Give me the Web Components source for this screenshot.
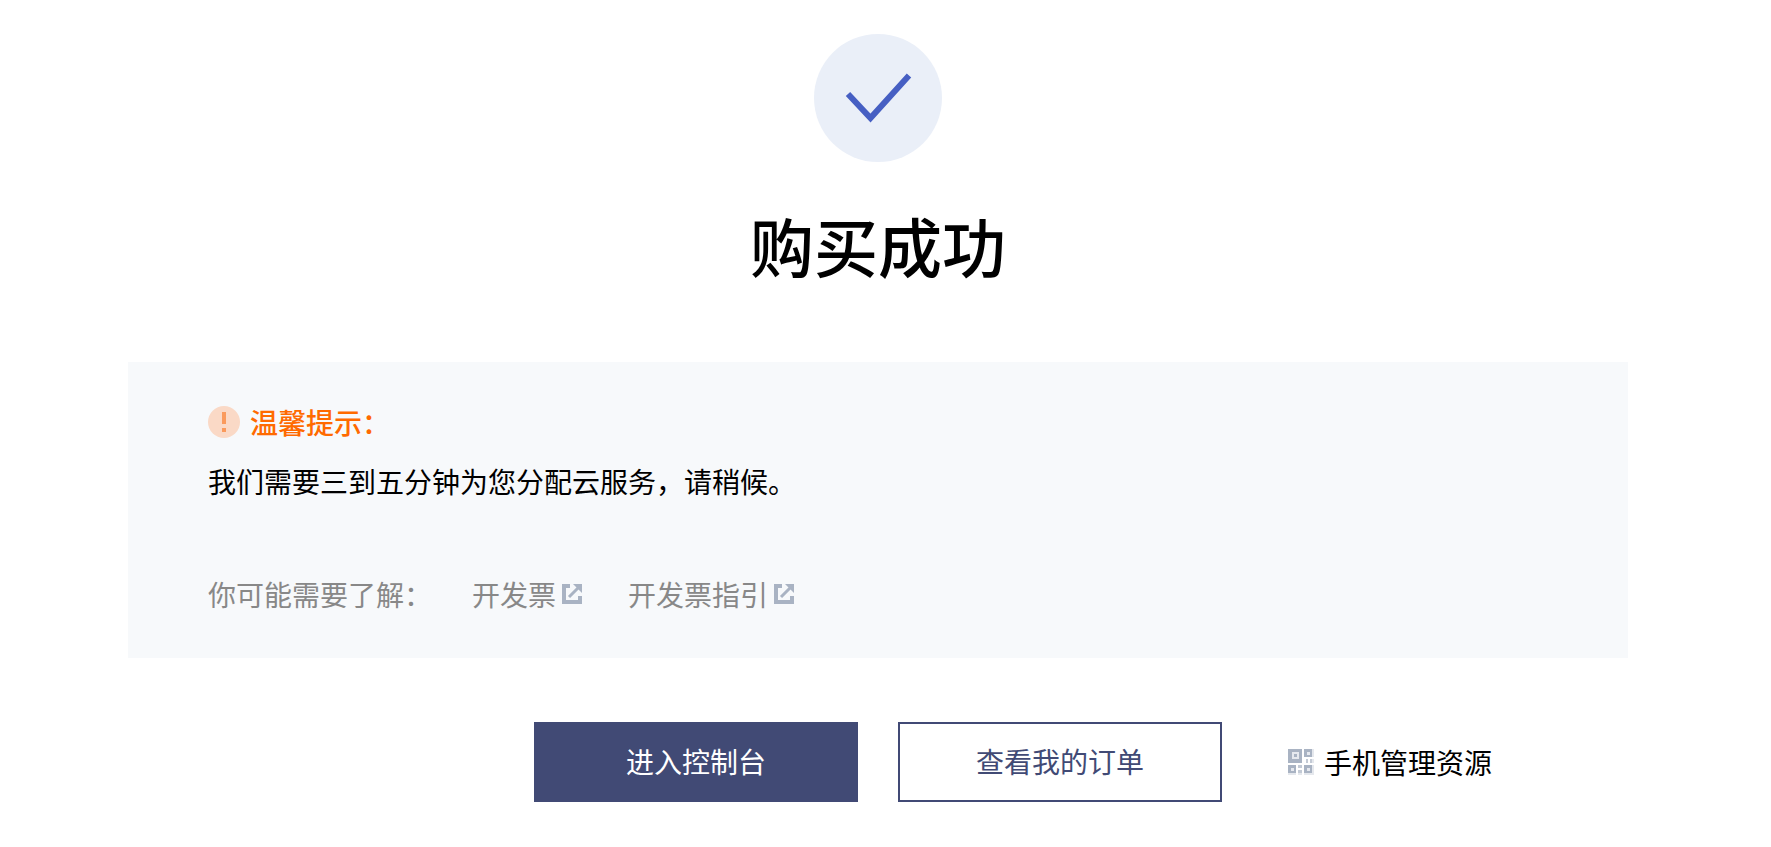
<!DOCTYPE html>
<html lang="zh-CN">
<head>
<meta charset="utf-8">
<title>购买成功</title>
<style>
  body {
    margin: 0;
    background: #fff;
    color: #000;
    font: 28px/40px "Noto Sans CJK SC", sans-serif;
  }
</style>
</head>
<body>
<purchase-result>
  <span slot="title">购买成功</span>
  <notice-panel slot="notice">
    <span slot="heading">温馨提示：</span>
    我们需要三到五分钟为您分配云服务，请稍候。
    <span slot="more">你可能需要了解：</span>
    <external-link slot="more" href="#invoice">开发票</external-link>
    <external-link slot="more" href="#invoice-guide">开发票指引</external-link>
  </notice-panel>
  <action-button slot="actions" primary>进入控制台</action-button>
  <action-button slot="actions">查看我的订单</action-button>
  <mobile-link slot="aside" href="#mobile">手机管理资源</mobile-link>
</purchase-result>

<script>
/**
 * Base element which renders the static template of its class in an open shadow root.
 */
class BaseElement extends HTMLElement {
  constructor() {
    super();
    const template = document.createElement('template');
    template.innerHTML = `<style>${this.constructor.styles}</style>${this.constructor.template}`;
    this.attachShadow({ mode: 'open' }).appendChild(template.content.cloneNode(true));
  }
}

/** Base for elements which wrap an anchor and pass their href on to it. */
class LinkElement extends BaseElement {
  static get observedAttributes() {
    return ['href'];
  }

  attributeChangedCallback(name, oldValue, newValue) {
    this.shadowRoot.querySelector('a').setAttribute(name, newValue);
  }
}

/** The round success mark. */
class SuccessMark extends BaseElement {
  static get styles() {
    return `
      :host { display: block; width: 128px; height: 128px; border-radius: 50%; background: #eaeff8; }
      svg { display: block; }
    `;
  }

  static get template() {
    return `
      <svg width="128" height="128" viewBox="0 0 128 128" fill="none" aria-hidden="true">
        <path d="M34 60 L56.5 84 L95 41.5" stroke="#465fc3" stroke-width="6"/>
      </svg>
    `;
  }
}

/** Link which opens elsewhere, marked with a small arrow icon. */
class ExternalLink extends LinkElement {
  static get styles() {
    return `
      :host { display: block; }
      a { display: flex; align-items: center; color: inherit; text-decoration: none; }
      svg { margin: 0 6px; }
    `;
  }

  static get template() {
    return `
      <a href="#"><slot></slot>
        <svg width="20" height="20" viewBox="0 0 20 20" fill="none" stroke="#a9b3c3" aria-hidden="true">
          <path d="M8 2H2V18H18V12" stroke-width="4"/>
          <path d="M7 13L16 4" stroke-width="3"/>
          <path d="M11 0H20V9Z" fill="#a9b3c3" stroke="none"/>
        </svg>
      </a>
    `;
  }
}

/** Link to manage the resources by phone, with a QR code icon. */
class MobileLink extends LinkElement {
  static get styles() {
    return `
      :host { display: block; }
      a { display: flex; align-items: center; gap: 10px; color: inherit; text-decoration: none; }
    `;
  }

  static get template() {
    return `
      <a href="#">
        <svg width="26" height="26" viewBox="0 0 26 26" fill="#a9b3c3" aria-hidden="true">
          <path d="M0 0H14V14H0ZM16 0H24V8H16ZM0 16H8V24H0ZM16 16H24V24H16Z"/>
          <path d="M4 3H11V10H4ZM19 3H22V6H19ZM3 19H6V22H3ZM19 19H22V22H19Z" fill="#e6e9ef"/>
          <path d="M6 5H9V8H6Z"/>
          <path d="M10 16H14V19H10ZM10 21H14V24H10ZM18 10H20V14H18ZM22 10H24V14H22Z" opacity=".7"/>
          <path d="M24 0H26V8H24ZM24 10H26V14H24ZM24 16H26V26H24ZM0 24H8V26H0ZM10 24H14V26H10ZM16 24H24V26H16Z" opacity=".3"/>
        </svg>
        <slot></slot>
      </a>
    `;
  }
}

/** Wide button, filled when it has the primary attribute. */
class ActionButton extends BaseElement {
  static get styles() {
    return `
      :host { display: block; width: 324px; }
      button {
        display: block;
        width: 100%;
        padding: 17px 0 19px;
        border: 2px solid #414a75;
        background: #fff;
        color: #414a75;
        font: inherit;
        cursor: pointer;
      }
      :host([primary]) button { background: #414a75; color: #fff; }
    `;
  }

  static get template() {
    return '<button type="button"><slot></slot></button>';
  }
}

/** Panel with a notice and a row of further links. */
class NoticePanel extends BaseElement {
  static get styles() {
    return `
      :host { display: block; padding: 40px 80px 44px; background: #f7f9fb; }
      .heading { display: flex; align-items: center; gap: 10px; color: #ff6a00; font-weight: 500; }
      p { margin: 19px 0 73px; }
      .more { display: flex; flex-wrap: wrap; gap: 40px; color: #888; }
    `;
  }

  static get template() {
    return `
      <div class="heading">
        <svg width="32" height="32" viewBox="0 0 32 32" aria-hidden="true">
          <circle cx="16" cy="16" r="16" fill="#fad9c6"/>
          <path d="M14 6H18V18H14ZM14 22H18V26H14Z" fill="#fa9a5c"/>
        </svg>
        <slot name="heading"></slot>
      </div>
      <p><slot></slot></p>
      <div class="more"><slot name="more"></slot></div>
    `;
  }
}

/** The whole result page. */
class PurchaseResult extends BaseElement {
  static get styles() {
    return `
      :host { display: block; padding: 34px 143px 44px 128px; }
      success-mark { margin: 0 auto; }
      h1 { margin: 34px 0 70px; font-size: 64px; line-height: 96px; font-weight: 500; text-align: center; }
      footer { display: grid; grid-template-columns: 1fr auto 1fr; align-items: center; margin-top: 64px; }
      .actions { display: flex; gap: 40px; grid-column: 2; }
      .aside { padding-left: 66px; }
    `;
  }

  static get template() {
    return `
      <success-mark></success-mark>
      <h1><slot name="title"></slot></h1>
      <slot name="notice"></slot>
      <footer>
        <div class="actions"><slot name="actions"></slot></div>
        <div class="aside"><slot name="aside"></slot></div>
      </footer>
    `;
  }
}

customElements.define('success-mark', SuccessMark);
customElements.define('external-link', ExternalLink);
customElements.define('mobile-link', MobileLink);
customElements.define('action-button', ActionButton);
customElements.define('notice-panel', NoticePanel);
customElements.define('purchase-result', PurchaseResult);
</script>
</body>
</html>
